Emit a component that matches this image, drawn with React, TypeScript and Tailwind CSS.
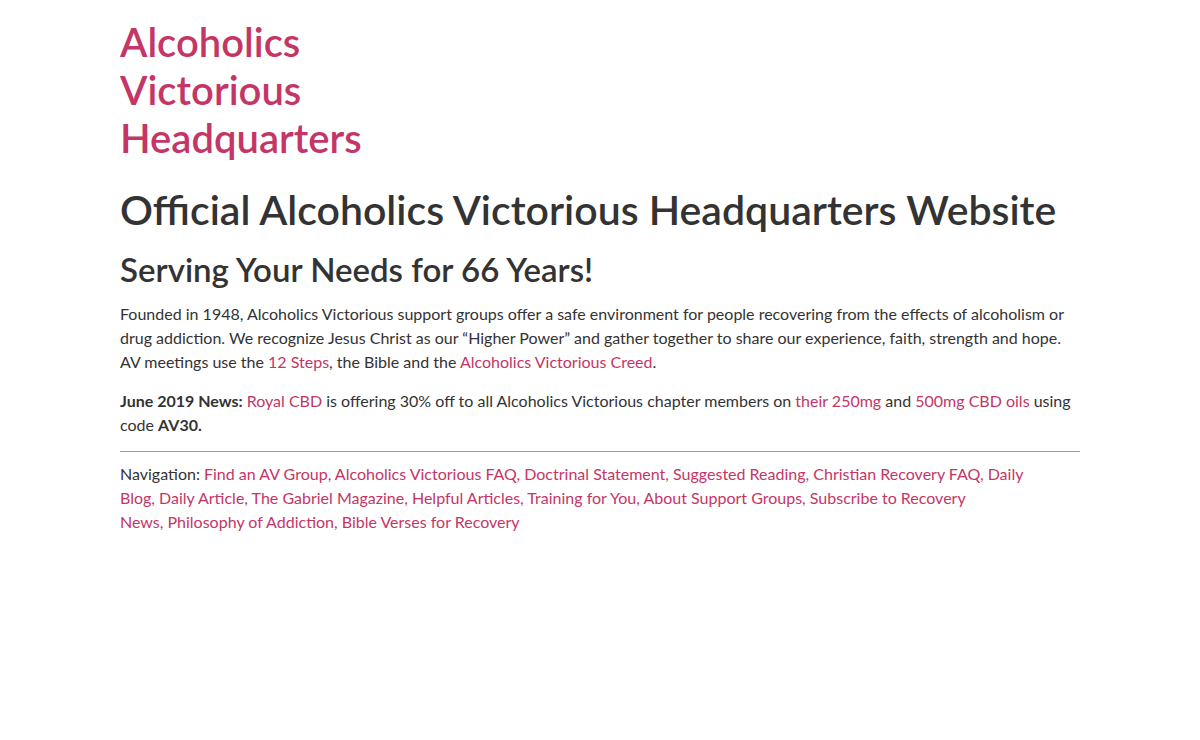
export default function App() {
  const link = "text-[#c43666] hover:underline";
  const nav = [
    "Find an AV Group",
    "Alcoholics Victorious FAQ",
    "Doctrinal Statement",
    "Suggested Reading",
    "Christian Recovery FAQ",
    "Daily Blog",
    "Daily Article",
    "The Gabriel Magazine",
    "Helpful Articles",
    "Training for You",
    "About Support Groups",
    "Subscribe to Recovery News",
    "Philosophy of Addiction",
    "Bible Verses for Recovery",
  ];

  return (
    <div className="min-h-screen bg-white text-[#333] font-['Lato','Liberation_Sans',sans-serif]">
      <div className="w-[960px] mx-auto pt-[18px]">
        <header>
          <a href="#" className="block w-[300px] text-[40px] leading-[48px] font-semibold text-[#c43666]">
            Alcoholics Victorious Headquarters
          </a>
        </header>
        <main>
          <h1 className="mt-[24px] text-[41px] leading-[48px] font-semibold">
            Official Alcoholics Victorious Headquarters Website
          </h1>
          <h2 className="mt-[17px] text-[33px] leading-[36px] font-semibold">
            Serving Your Needs for 66 Years!
          </h2>
          <p className="mt-[15px] text-[16px] leading-[24px]">
            Founded in 1948, Alcoholics Victorious support groups offer a safe environment for people recovering from
            the effects of alcoholism or drug addiction. We recognize Jesus Christ as our “Higher Power” and gather
            together to share our experience, faith, strength and hope. AV meetings use the{" "}
            <a href="#" className={link}>12 Steps</a>, the Bible and the{" "}
            <a href="#" className={link}>Alcoholics Victorious Creed</a>.
          </p>
          <p className="mt-[15px] text-[16px] leading-[24px]">
            <strong>June 2019 News:</strong> <a href="#" className={link}>Royal CBD</a> is offering 30% off to all
            Alcoholics Victorious chapter members on <a href="#" className={link}>their 250mg</a> and{" "}
            <a href="#" className={link}>500mg CBD oils</a> using code <strong>AV30.</strong>
          </p>
        </main>
        <hr className="mt-[14px] border-t border-[#999]" />
        <footer className="mt-[10px] w-[920px] text-[16px] leading-[24px]">
          Navigation:{" "}
          {nav.map((n, i) => (
            <span key={n}>
              <a href="#" className={link}>
                {n === "Subscribe to Recovery News" ? (
                  <>
                    Subscribe to Recovery
                    <br />
                    News
                  </>
                ) : (
                  n
                )}
              </a>
              {i < nav.length - 1 ? <span className="text-[#c43666]">, </span> : null}
            </span>
          ))}
        </footer>
      </div>
    </div>
  );
}
